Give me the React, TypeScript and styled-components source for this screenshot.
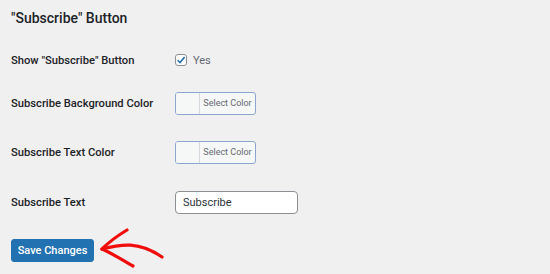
import React from 'react';
import styled, {createGlobalStyle} from "styled-components";

const GlobalStyle = createGlobalStyle`
    html, body {
        margin: 0;
        padding: 0;
        background: #f0f0f1;
    }
    body {
        font-family: Roboto, "Liberation Sans", Arial, sans-serif;
        color: #1d2327;
    }
`

type RowPropsType = {
    label: string
    height: number
    children: React.ReactNode
}

const Row = (props: RowPropsType) => {
    return (
        <StyledRow $h={props.height}>
            <Label>{props.label}</Label>
            <Field>{props.children}</Field>
        </StyledRow>
    );
};

const ColorPicker = () => {
    return (
        <ColorButton type="button">
            <Swatch/>
            <ColorText>Select Color</ColorText>
        </ColorButton>
    );
};

const Arrow = () => (
    <ArrowSvg width="70" height="42" viewBox="0 0 70 42">
        <g fill="none" stroke="#f20d0d" strokeWidth="3.2" strokeLinecap="round" strokeLinejoin="round">
            <path d="M3 23 C 22 18, 40 15, 63 31"/>
            <path d="M28 4 C 18 10, 10 16, 3 23 C 12 27, 22 33, 34 40"/>
        </g>
    </ArrowSvg>
);

export default function App() {
    return (
        <Page>
            <GlobalStyle/>
            <Title>"Subscribe" Button</Title>
            <Rows>
                <Row label={'Show "Subscribe" Button'} height={38}>
                    <CheckLabel>
                        <Checkbox>
                            <svg width="10" height="10" viewBox="0 0 10 10">
                                <path d="M1.6 5.2 L4 7.6 L8.6 2" fill="none" stroke="#2271b1" strokeWidth="1.6"/>
                            </svg>
                        </Checkbox>
                        Yes
                    </CheckLabel>
                </Row>
                <Row label="Subscribe Background Color" height={48}>
                    <ColorPicker/>
                </Row>
                <Row label="Subscribe Text Color" height={50}>
                    <ColorPicker/>
                </Row>
                <Row label="Subscribe Text" height={50}>
                    <TextInput defaultValue="Subscribe"/>
                </Row>
            </Rows>
            <Submit>
                <SaveButton type="button">Save Changes</SaveButton>
                <Arrow/>
            </Submit>
        </Page>
    );
}

const Page = styled.div`
    padding: 10px 11px 0;
    width: 550px;
    height: 274px;
    box-sizing: border-box;
`
const Title = styled.h2`
    margin: 0 0 14px;
    font-size: 14px;
    line-height: 17px;
    font-weight: 500;
    color: #1d2327;
`
const Rows = styled.div`
    display: flex;
    flex-direction: column;
`
const StyledRow = styled.div<{ $h: number }>`
    display: grid;
    grid-template-columns: 164px 1fr;
    align-items: center;
    height: ${props => props.$h}px;
`
const Label = styled.div`
    font-size: 11.2px;
    font-weight: 500;
    color: #1d2327;
`
const Field = styled.div`
    display: flex;
    align-items: center;
`
const CheckLabel = styled.label`
    display: flex;
    align-items: center;
    gap: 6px;
    font-size: 11px;
    color: #646970;
`
const Checkbox = styled.span`
    display: flex;
    align-items: center;
    justify-content: center;
    width: 10px;
    height: 10px;
    border: 1px solid #8c8f94;
    border-radius: 3px;
    background: #fff;
`
const ColorButton = styled.button`
    display: flex;
    align-items: stretch;
    padding: 0;
    width: 81px;
    height: 23px;
    border: 1px solid #8ea6cf;
    border-radius: 3px;
    background: #f6f7f7;
    overflow: hidden;
    box-sizing: border-box;
`
const Swatch = styled.span`
    width: 23px;
    background: #f6f7f7;
    border-right: 1px solid #d5d8dc;
`
const ColorText = styled.span`
    flex: 1;
    display: flex;
    align-items: center;
    justify-content: center;
    font-family: Roboto, "Liberation Sans", Arial, sans-serif;
    font-size: 9px;
    color: #646970;
`
const TextInput = styled.input`
    width: 123px;
    height: 23px;
    box-sizing: border-box;
    padding: 0 7px;
    border: 1px solid #8c8f94;
    border-radius: 4px;
    background: #fff;
    font-family: Roboto, "Liberation Sans", Arial, sans-serif;
    font-size: 11px;
    color: #2c3338;
    outline: none;
`
const Submit = styled.div`
    display: flex;
    align-items: flex-start;
    margin-top: 12px;
`
const SaveButton = styled.button`
    width: 83px;
    height: 23px;
    padding: 0;
    border: 1px solid #2271b1;
    border-radius: 3px;
    background: #2271b1;
    color: #fff;
    font-family: Roboto, "Liberation Sans", Arial, sans-serif;
    font-size: 11px;
    font-weight: 500;
`
const ArrowSvg = styled.svg`
    margin: -13px 0 0 5px;
`
